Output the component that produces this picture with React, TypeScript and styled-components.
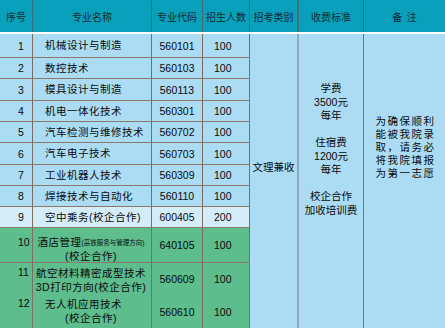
import styled, { createGlobalStyle } from "styled-components";

const COLS = "33px 119px 51px 47px 49px 65px 81px";

type Tone = "blue" | "pale" | "green";

const tones: Record<Tone, string> = {
  blue: "#abdcf4",
  pale: "#d5edf9",
  green: "#5dbd8d",
};

const rows: {
  no: string;
  name: string;
  code: string;
  count: string;
  tone: Tone;
}[] = [
  { no: "1", name: "机械设计与制造", code: "560101", count: "100", tone: "blue" },
  { no: "2", name: "数控技术", code: "560103", count: "100", tone: "blue" },
  { no: "3", name: "模具设计与制造", code: "560113", count: "100", tone: "blue" },
  { no: "4", name: "机电一体化技术", code: "560301", count: "100", tone: "blue" },
  { no: "5", name: "汽车检测与维修技术", code: "560702", count: "100", tone: "blue" },
  { no: "6", name: "汽车电子技术", code: "560703", count: "100", tone: "blue" },
  { no: "7", name: "工业机器人技术", code: "560309", count: "100", tone: "blue" },
  { no: "8", name: "焊接技术与自动化", code: "560110", count: "100", tone: "blue" },
  { no: "9", name: "空中乘务(校企合作)", code: "600405", count: "200", tone: "pale" },
];

function App() {
  return (
    <>
      <GlobalStyle />
      <Page>
        <HeaderRow>
          <HeadCell>序号</HeadCell>
          <HeadCell>专业名称</HeadCell>
          <HeadCell>专业代码</HeadCell>
          <HeadCell>招生人数</HeadCell>
          <HeadCell $thick>招考类别</HeadCell>
          <HeadCell>收费标准</HeadCell>
          <HeadCell $last>备&nbsp;&nbsp;注</HeadCell>
        </HeaderRow>
        <Body>
          <Category>文理兼收</Category>
          <Fee>
            <span>学费</span>
            <span>3500元</span>
            <span>每年</span>
            <span>&nbsp;</span>
            <span>住宿费</span>
            <span>1200元</span>
            <span>每年</span>
            <span>&nbsp;</span>
            <span>校企合作</span>
            <span>加收培训费</span>
          </Fee>
          <Note>
            <span>为确保顺利</span>
            <span>能被我院录</span>
            <span>取，请务必</span>
            <span>将我院填报</span>
            <span>为第一志愿</span>
          </Note>

          {rows.map((r) => (
            <Row key={r.no} {...r} />
          ))}

          <Seq $tone="green" $pad={8}>10</Seq>
          <Name $tone="green" $pad={8}>
            <Line $center>
              酒店管理<Small>(高铁服务与管理方向)</Small>
            </Line>
            <Line $center>(校企合作)</Line>
          </Name>
          <Code $tone="green">640105</Code>
          <Count $tone="green">100</Count>

          <Seq $tone="green" $pad={3} $open>11</Seq>
          <Name $tone="green" $pad={3} $open>
            <Line $center $tall>航空材料精密成型技术</Line>
            <Line $center $tall>3D打印方向(校企合作)</Line>
          </Name>
          <Code $tone="green" $open>560609</Code>
          <Count $tone="green" $open>100</Count>

          <Seq $tone="green" $pad={2} $open>12</Seq>
          <Name $tone="green" $pad={2} $open>
            <Line $tall>无人机应用技术</Line>
            <Line $center $tall>(校企合作)</Line>
          </Name>
          <Code $tone="green" $open>560610</Code>
          <Count $tone="green" $open>100</Count>
        </Body>
      </Page>
    </>
  );
}

function Row({ no, name, code, count, tone }: (typeof rows)[number]) {
  return (
    <>
      <Seq $tone={tone}>{no}</Seq>
      <Name $tone={tone}>
        <Line>{name}</Line>
      </Name>
      <Code $tone={tone}>{code}</Code>
      <Count $tone={tone}>{count}</Count>
    </>
  );
}

const GlobalStyle = createGlobalStyle`
  html, body {
    margin: 0;
    padding: 0;
    background: #ffffff;
  }
`;

const Page = styled.div`
  width: 445px;
  height: 328px;
  overflow: hidden;
  font-family: "Liberation Sans", "Noto Sans CJK SC", sans-serif;
  color: #0a0a0a;
  background: #abdcf4;
`;

const HeaderRow = styled.div`
  display: grid;
  grid-template-columns: ${COLS};
  height: 32px;
  background: #09a0bc;
  border-bottom: 2px solid #ffffff;
`;

const HeadCell = styled.div<{ $thick?: boolean; $last?: boolean }>`
  display: flex;
  align-items: center;
  justify-content: center;
  box-sizing: border-box;
  font-family: "Noto Sans CJK SC", sans-serif;
  font-size: 10px;
  color: #0f2a31;
  white-space: pre;
  border-right: ${({ $thick, $last }) =>
    $last ? "none" : $thick ? "2px solid #3c7280" : "1px solid #3d6a74"};
`;

const Body = styled.div`
  display: grid;
  grid-template-columns: ${COLS};
  grid-template-rows: 24px 21px 22px 21px 21px 22px 21px 21px 21px 35px 32px 34px;
`;

const Cell = styled.div<{ $tone: Tone; $open?: boolean }>`
  box-sizing: border-box;
  display: flex;
  align-items: center;
  background: ${({ $tone }) => tones[$tone]};
  border-right: 1px solid #7c6e63;
  border-bottom: ${({ $open }) => ($open ? "none" : "1px solid #8b7868")};
  font-size: 10.5px;
`;

const Seq = styled(Cell)<{ $pad?: number }>`
  padding-left: 18px;
  ${({ $pad }) =>
    $pad !== undefined
      ? `align-items: flex-start; padding-top: ${$pad}px; line-height: 13px;`
      : ""}
`;

const Name = styled(Cell)<{ $pad?: number }>`
  flex-direction: column;
  align-items: stretch;
  justify-content: ${({ $pad }) => ($pad !== undefined ? "flex-start" : "center")};
  padding-top: ${({ $pad }) => $pad ?? 0}px;
  letter-spacing: 0.5px;
`;

const Line = styled.div<{ $center?: boolean; $tall?: boolean }>`
  line-height: ${({ $tall }) => ($tall ? "14px" : "12.5px")};
  white-space: nowrap;
  text-align: ${({ $center }) => ($center ? "center" : "left")};
  padding-left: ${({ $center }) => ($center ? "0" : "12px")};
  padding-right: ${({ $center }) => ($center ? "2px" : "0")};
`;

const Small = styled.span`
  font-size: 6.5px;
  letter-spacing: 0;
  vertical-align: 1px;
`;

const Code = styled(Cell)`
  justify-content: center;
`;

const Count = styled(Cell)`
  padding-left: 11px;
`;

const Merged = styled.div`
  grid-row: 1 / -1;
  box-sizing: border-box;
  display: flex;
  flex-direction: column;
  align-items: center;
  background: #abdcf4;
  font-size: 10.5px;
`;

const Category = styled(Merged)`
  grid-column: 5;
  padding-top: 127px;
  line-height: 13px;
  border-right: 2px solid #8eaabb;
`;

const Fee = styled(Merged)`
  grid-column: 6;
  padding-top: 48px;
  line-height: 13.5px;
  border-right: 1px solid #767676;
`;

const Note = styled(Merged)`
  grid-column: 7;
  padding-top: 81px;
  line-height: 13px;
  letter-spacing: 1.5px;
  padding-left: 2px;
`;

export default App;
